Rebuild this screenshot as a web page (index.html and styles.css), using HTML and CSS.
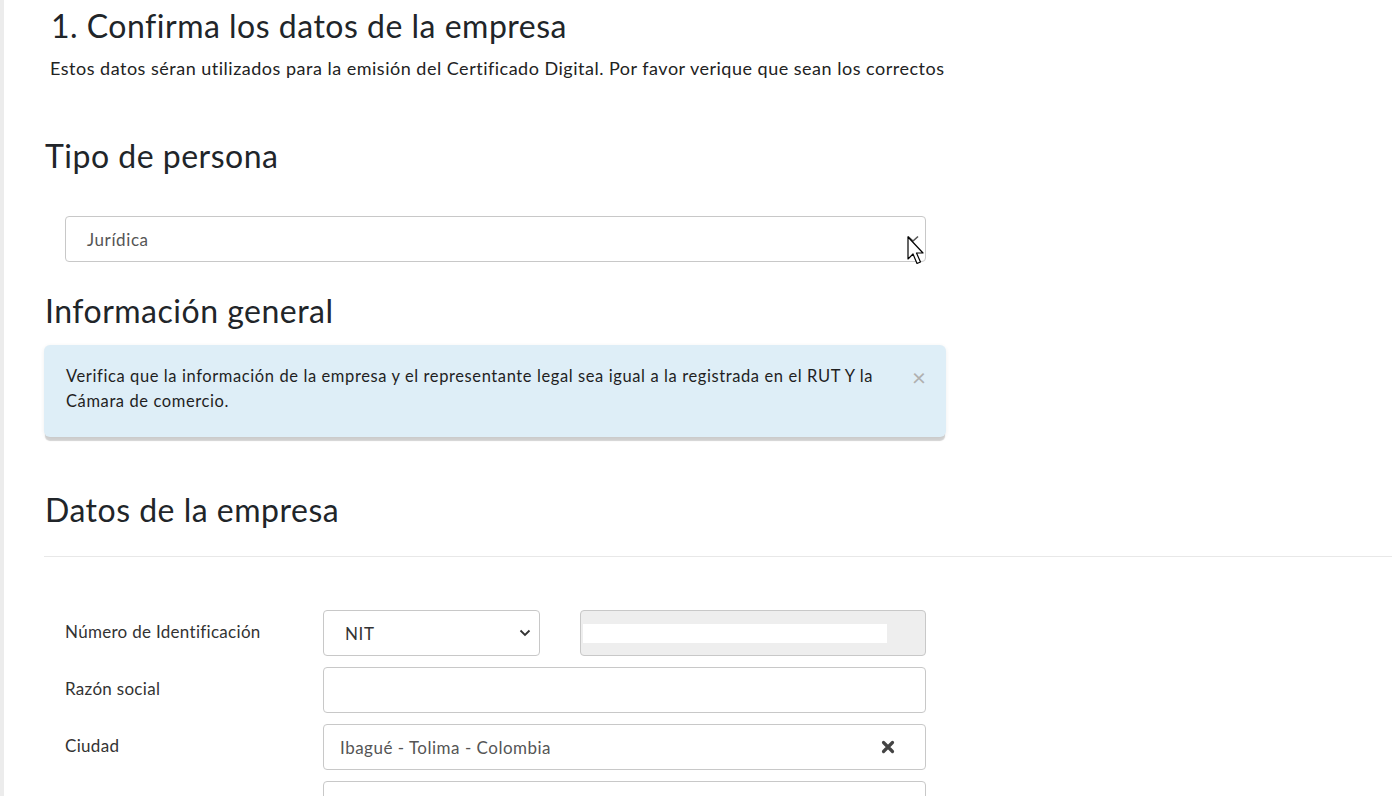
FILE: index.html
```html
<!DOCTYPE html>
<html lang="es">
<head>
    <meta charset="UTF-8">
    <meta name="viewport" content="width=device-width, initial-scale=1.0">
    <title>Confirma los datos de la empresa</title>
    <link rel="stylesheet" href="styles.css">
</head>
<body>
    <div class="page">
        <h1 class="step-title">1. Confirma los datos de la empresa</h1>
        <p class="step-subtitle">Estos datos séran utilizados para la emisión del Certificado Digital. Por favor verique que sean los correctos</p>

        <h2 class="section-title first">Tipo de persona</h2>
        <div class="persona-select">
            <div class="select-box wide">
                <span class="select-value">Jurídica</span>
                <svg class="chevron" width="12" height="8" viewBox="0 0 12 8"><path d="M1 1.5 L6 6 L11 1.5" fill="none" stroke="#555" stroke-width="1.6"/></svg>
            </div>
            <!-- mouse pointer over the select -->
            <svg class="pointer" width="18" height="30" viewBox="0 0 18 30">
                <path d="M1 1 L1 23 L6 18 L10 27.5 L13.5 26 L9.5 17 L16 17 Z" fill="#fff" stroke="#000" stroke-width="1.2" stroke-linejoin="round"/>
            </svg>
        </div>

        <h2 class="section-title info">Información general</h2>
        <div class="alert">
            <p>Verifica que la información de la empresa y el representante legal sea igual a la registrada en el RUT Y la Cámara de comercio.</p>
            <span class="alert-close">&times;</span>
        </div>

        <h2 class="section-title datos">Datos de la empresa</h2>
        <hr class="divider">

        <div class="form-rows">
            <div class="form-row">
                <label>Número de Identificación</label>
                <div class="field split">
                    <div class="select-box small">
                        <span class="select-value">NIT</span>
                        <svg class="chevron dark" width="12" height="8" viewBox="0 0 12 8"><path d="M1.5 1.5 L6 6 L10.5 1.5" fill="none" stroke="#333" stroke-width="1.8"/></svg>
                    </div>
                    <div class="input disabled"><span class="masked"></span></div>
                </div>
            </div>
            <div class="form-row">
                <label>Razón social</label>
                <div class="field"><div class="input"></div></div>
            </div>
            <div class="form-row">
                <label>Ciudad</label>
                <div class="field">
                    <div class="input with-clear">
                        <span class="input-value">Ibagué - Tolima - Colombia</span>
                        <svg class="clear" width="14" height="14" viewBox="0 0 14 14"><path d="M2.5 2.5 L11.5 11.5 M11.5 2.5 L2.5 11.5" stroke="#444" stroke-width="3.2" stroke-linecap="round"/></svg>
                    </div>
                </div>
            </div>
            <div class="form-row">
                <label>Dirección</label>
                <div class="field">
                    <div class="input"><span class="input-value">Calle 7 #8 - 27</span></div>
                </div>
            </div>
        </div>
    </div>
</body>
</html>
```

FILE: styles.css
```css
* {
    box-sizing: border-box;
}

html, body {
    margin: 0;
    padding: 0;
}

body {
    font-family: "Lato", "Open Sans", sans-serif;
    color: #212529;
    background-color: #fff;
    height: 796px;
    overflow: hidden;
}

.page {
    border-left: 4px solid #ececec;
    height: 796px;
    overflow: hidden;
    padding-left: 41px;
}

.step-title {
    font-size: 32px;
    font-weight: 400;
    letter-spacing: 0.5px;
    line-height: 38px;
    margin: 7px 0 0;
    padding-left: 6px;
}

.step-subtitle {
    font-size: 18px;
    letter-spacing: 0.5px;
    line-height: 24px;
    margin: 11px 0 0;
    padding-left: 5px;
    color: #222;
}

.section-title {
    font-size: 32px;
    font-weight: 400;
    letter-spacing: 0.5px;
    line-height: 38px;
    margin: 0;
}

.section-title.first {
    margin-top: 57px;
}

.section-title.info {
    margin-top: 30px;
}

.section-title.datos {
    margin-top: 54px;
}

/* select look-alikes */
.persona-select {
    position: relative;
    margin: 41px 0 0 20px;
    width: 861px;
}

.select-box {
    display: flex;
    align-items: center;
    justify-content: space-between;
    height: 46px;
    border: 1px solid #c8c8c8;
    border-radius: 4px;
    background: #fff;
    padding: 0 6px 0 21px;
    font-size: 17px;
    letter-spacing: 0.6px;
    color: #555;
}

.select-box.small {
    width: 217px;
    color: #333;
    padding-right: 8px;
}

.pointer {
    position: absolute;
    left: 842px;
    top: 20px;
}

/* info alert */
.alert {
    position: relative;
    margin: 15px 0 0 -1px;
    width: 902px;
    background-color: #deeef7;
    border-radius: 6px;
    padding: 19px 56px 23px 22px;
    box-shadow: 0 5px 1px -1px rgba(0, 0, 0, 0.17), 0 1px 4px rgba(0, 0, 0, 0.07);
}

.alert p {
    margin: 0;
    font-size: 16.5px;
    letter-spacing: 0.6px;
    line-height: 25px;
    color: #1f1f1f;
}

.alert-close {
    position: absolute;
    right: 20px;
    top: 20px;
    font-size: 24px;
    line-height: 24px;
    color: #b0b0b0;
}

.divider {
    border: 0;
    border-top: 1px solid #e8e8e8;
    margin: 27px 0 0 -1px;
}

/* company data form */
.form-rows {
    margin-top: 53px;
    padding-left: 20px;
    display: flex;
    flex-direction: column;
    gap: 11px;
}

.form-row {
    display: grid;
    grid-template-columns: 258px 603px;
    align-items: center;
}

.form-row label {
    font-size: 17px;
    letter-spacing: 0.3px;
    color: #333;
    padding-bottom: 4px;
}

.field.split {
    display: flex;
    justify-content: space-between;
}

.input {
    display: flex;
    align-items: center;
    justify-content: space-between;
    height: 46px;
    border: 1px solid #c8c8c8;
    border-radius: 4px;
    background: #fff;
    padding: 0 30px 0 16px;
    font-size: 17px;
    letter-spacing: 0.5px;
    color: #555;
}

.input.disabled {
    width: 346px;
    background-color: #eeeeee;
    padding: 0 38px 0 2px;
}

.masked {
    display: block;
    width: 100%;
    height: 19px;
    background: #fff;
}
```
